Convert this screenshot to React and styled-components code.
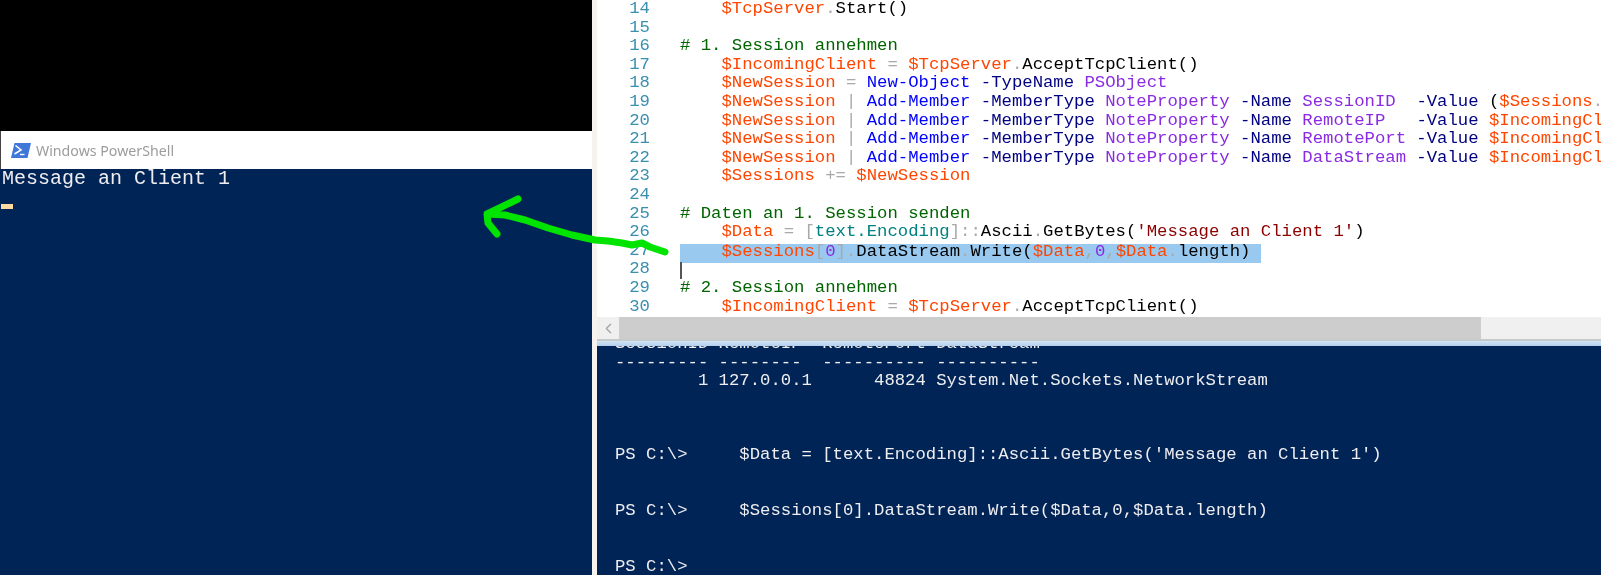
import React from 'react'
import styled, { createGlobalStyle } from 'styled-components'
import { ChevronLeft } from 'lucide-react'

const GlobalStyle = createGlobalStyle`
  html, body {
    margin: 0;
    padding: 0;
    background: #000;
  }
`;

const tokenColors = {
  v: '#ff4500', // variable
  o: '#a9a9a9', // operator
  c: '#0000ff', // command
  p: '#000080', // parameter
  a: '#8a2be2', // argument / number
  m: '#000000', // member
  h: '#006400', // comment
  y: '#008080', // type
  s: '#8b0000', // string
};

const Page = styled.div`
  position: relative;
  display: flex;
  width: 1601px;
  height: 575px;
  overflow: hidden;
  filter: blur(0.3px);
`;

const LeftColumn = styled.div`
  display: flex;
  flex-direction: column;
  width: 592px;
  flex: none;
`;

const BlackArea = styled.div`
  height: 131px;
  background: #000;
`;

const TitleBar = styled.div`
  display: flex;
  align-items: center;
  gap: 5px;
  height: 38px;
  padding-left: 10px;
  box-sizing: border-box;
  background: #fff;
  border-left: 1px solid #444;
  font-family: "Noto Sans", sans-serif;
  font-size: 14.2px;
  color: #9c9c9c;
`;

const ClientConsole = styled.div`
  flex: 1;
  background: #012456;
  color: #eeedf0;
  font-family: "Liberation Mono", monospace;
  font-size: 20px;
  line-height: 18px;
  padding: 1px 0 0 2px;
  white-space: pre;
`;

const BlockCursor = styled.div`
  width: 12px;
  height: 5px;
  margin: 16px 0 0 -1px;
  background: #fdd8a0;
`;

const RightColumn = styled.div`
  display: flex;
  flex-direction: column;
  flex: 1;
  min-width: 0;
  border-left: 5px solid #f6f2ee;
`;

const Editor = styled.div`
  height: 317px;
  flex: none;
  overflow: hidden;
  background: #fff;
  font-family: "Liberation Mono", monospace;
  font-size: 17.3px;
`;

const CodeRow = styled.div`
  display: flex;
  height: 18.6px;
  line-height: 18.6px;
  white-space: pre;
`;

const LineNo = styled.span`
  width: 53px;
  flex: none;
  text-align: right;
  color: #3a8fae;
`;

const Code = styled.span`
  margin-left: 30px;
`;

const Selected = styled.span`
  display: inline-block;
  height: 19px;
  background: #99c9ef;
  margin-top: 2px;
  line-height: 15px;
`;

const Caret = styled.span`
  display: inline-block;
  width: 2px;
  height: 17px;
  margin-top: 2px;
  background: #555;
`;

const Tok = styled.span`
  color: ${p => tokenColors[p.$kind]};
`;

const HScrollbar = styled.div`
  display: flex;
  height: 22px;
  flex: none;
  background: #f0f0f0;
`;

const ScrollButton = styled.div`
  display: flex;
  align-items: center;
  justify-content: center;
  width: 22px;
  color: #a6a6a6;
`;

const ScrollThumb = styled.div`
  width: 862px;
  background: #cdcdcd;
`;

const Splitter = styled.div`
  height: 7px;
  flex: none;
  box-sizing: border-box;
  border-top: 2px solid #c4cbcb;
  background: linear-gradient(#d3e4f5, #b4cfec);
`;

const ConsolePane = styled.div`
  flex: 1;
  overflow: hidden;
  background: #012456;
  color: #eeedf0;
  font-family: "Liberation Mono", monospace;
  font-size: 17.27px;
  line-height: 18.55px;
  white-space: pre;
`;

const ConsoleText = styled.div`
  margin-top: -11px;
  padding-left: 18px;
`;

const ArrowOverlay = styled.svg`
  position: absolute;
  left: 0;
  top: 0;
  pointer-events: none;
`;

const codeLines = [
  [14, [['v', '    $TcpServer'], ['o', '.'], ['m', 'Start()']]],
  [15, []],
  [16, [['h', '# 1. Session annehmen']]],
  [17, [['v', '    $IncomingClient'], ['o', ' = '], ['v', '$TcpServer'], ['o', '.'], ['m', 'AcceptTcpClient()']]],
  [18, [['v', '    $NewSession'], ['o', ' = '], ['c', 'New-Object'], ['p', ' -TypeName'], ['a', ' PSObject']]],
  [19, [['v', '    $NewSession'], ['o', ' | '], ['c', 'Add-Member'], ['p', ' -MemberType'], ['a', ' NoteProperty'], ['p', ' -Name'], ['a', ' SessionID'], ['p', '  -Value'], ['m', ' ('], ['v', '$Sessions'], ['o', '.']]],
  [20, [['v', '    $NewSession'], ['o', ' | '], ['c', 'Add-Member'], ['p', ' -MemberType'], ['a', ' NoteProperty'], ['p', ' -Name'], ['a', ' RemoteIP'], ['p', '   -Value'], ['v', ' $IncomingClient']]],
  [21, [['v', '    $NewSession'], ['o', ' | '], ['c', 'Add-Member'], ['p', ' -MemberType'], ['a', ' NoteProperty'], ['p', ' -Name'], ['a', ' RemotePort'], ['p', ' -Value'], ['v', ' $IncomingClient']]],
  [22, [['v', '    $NewSession'], ['o', ' | '], ['c', 'Add-Member'], ['p', ' -MemberType'], ['a', ' NoteProperty'], ['p', ' -Name'], ['a', ' DataStream'], ['p', ' -Value'], ['v', ' $IncomingClient']]],
  [23, [['v', '    $Sessions'], ['o', ' += '], ['v', '$NewSession']]],
  [24, []],
  [25, [['h', '# Daten an 1. Session senden']]],
  [26, [['v', '    $Data'], ['o', ' = ['], ['y', 'text.Encoding'], ['o', ']::'], ['m', 'Ascii'], ['o', '.'], ['m', 'GetBytes('], ['s', "'Message an Client 1'"], ['m', ')']]],
  [27, [['v', '    $Sessions'], ['o', '['], ['a', '0'], ['o', '].'], ['m', 'DataStream'], ['o', '.'], ['m', 'Write('], ['v', '$Data'], ['o', ','], ['a', '0'], ['o', ','], ['v', '$Data'], ['o', '.'], ['m', 'length) ']], 'selected'],
  [28, [], 'caret'],
  [29, [['h', '# 2. Session annehmen']]],
  [30, [['v', '    $IncomingClient'], ['o', ' = '], ['v', '$TcpServer'], ['o', '.'], ['m', 'AcceptTcpClient()']]],
];

const consoleText = `SessionID RemoteIP  RemotePort DataStream
--------- --------  ---------- ----------
        1 127.0.0.1      48824 System.Net.Sockets.NetworkStream



PS C:\\>     $Data = [text.Encoding]::Ascii.GetBytes('Message an Client 1')


PS C:\\>     $Sessions[0].DataStream.Write($Data,0,$Data.length)


PS C:\\>`;

function PowerShellIcon() {
  return (
    <svg width="20" height="15" viewBox="0 0 20 15">
      <path d="M3.5 0H20L16.5 15H0Z" fill="#3f78d8" />
      <path d="M4.5 2.5L10 7L3.5 11" fill="none" stroke="#fff" strokeWidth="1.6" />
      <path d="M9 11.5H13.5" stroke="#fff" strokeWidth="1.4" />
    </svg>
  )
}

function CodeLine({ no, tokens, mark }) {
  const content = tokens.map(([kind, text], i) => <Tok key={i} $kind={kind}>{text}</Tok>);

  return (
    <CodeRow>
      <LineNo>{no}</LineNo>
      <Code>
        {mark === 'selected' ? <Selected>{content}</Selected> : content}
        {mark === 'caret' && <Caret />}
      </Code>
    </CodeRow>
  )
}

export default function App() {
  return (
    <Page>
      <GlobalStyle />
      <LeftColumn>
        <BlackArea />
        <TitleBar>
          <PowerShellIcon />
          Windows PowerShell
        </TitleBar>
        <ClientConsole>
          Message an Client 1
          <BlockCursor />
        </ClientConsole>
      </LeftColumn>
      <RightColumn>
        <Editor>
          {codeLines.map(([no, tokens, mark]) => (
            <CodeLine key={no} no={no} tokens={tokens} mark={mark} />
          ))}
        </Editor>
        <HScrollbar>
          <ScrollButton><ChevronLeft size={17} strokeWidth={2} /></ScrollButton>
          <ScrollThumb />
        </HScrollbar>
        <Splitter />
        <ConsolePane>
          <ConsoleText>{consoleText}</ConsoleText>
        </ConsolePane>
      </RightColumn>
      <ArrowOverlay width="1601" height="575" viewBox="0 0 1601 575">
        <path
          d="M665 252 L650 247 L642 243 L632 245 L622 243 L608 241 L595 240 L572 235 L548 228 L525 220 L505 215 L487 214 M518 199 L487 214 L488 223 L497 234"
          fill="none"
          stroke="#00e400"
          strokeWidth="7"
          strokeLinecap="round"
          strokeLinejoin="round"
        />
      </ArrowOverlay>
    </Page>
  )
}
